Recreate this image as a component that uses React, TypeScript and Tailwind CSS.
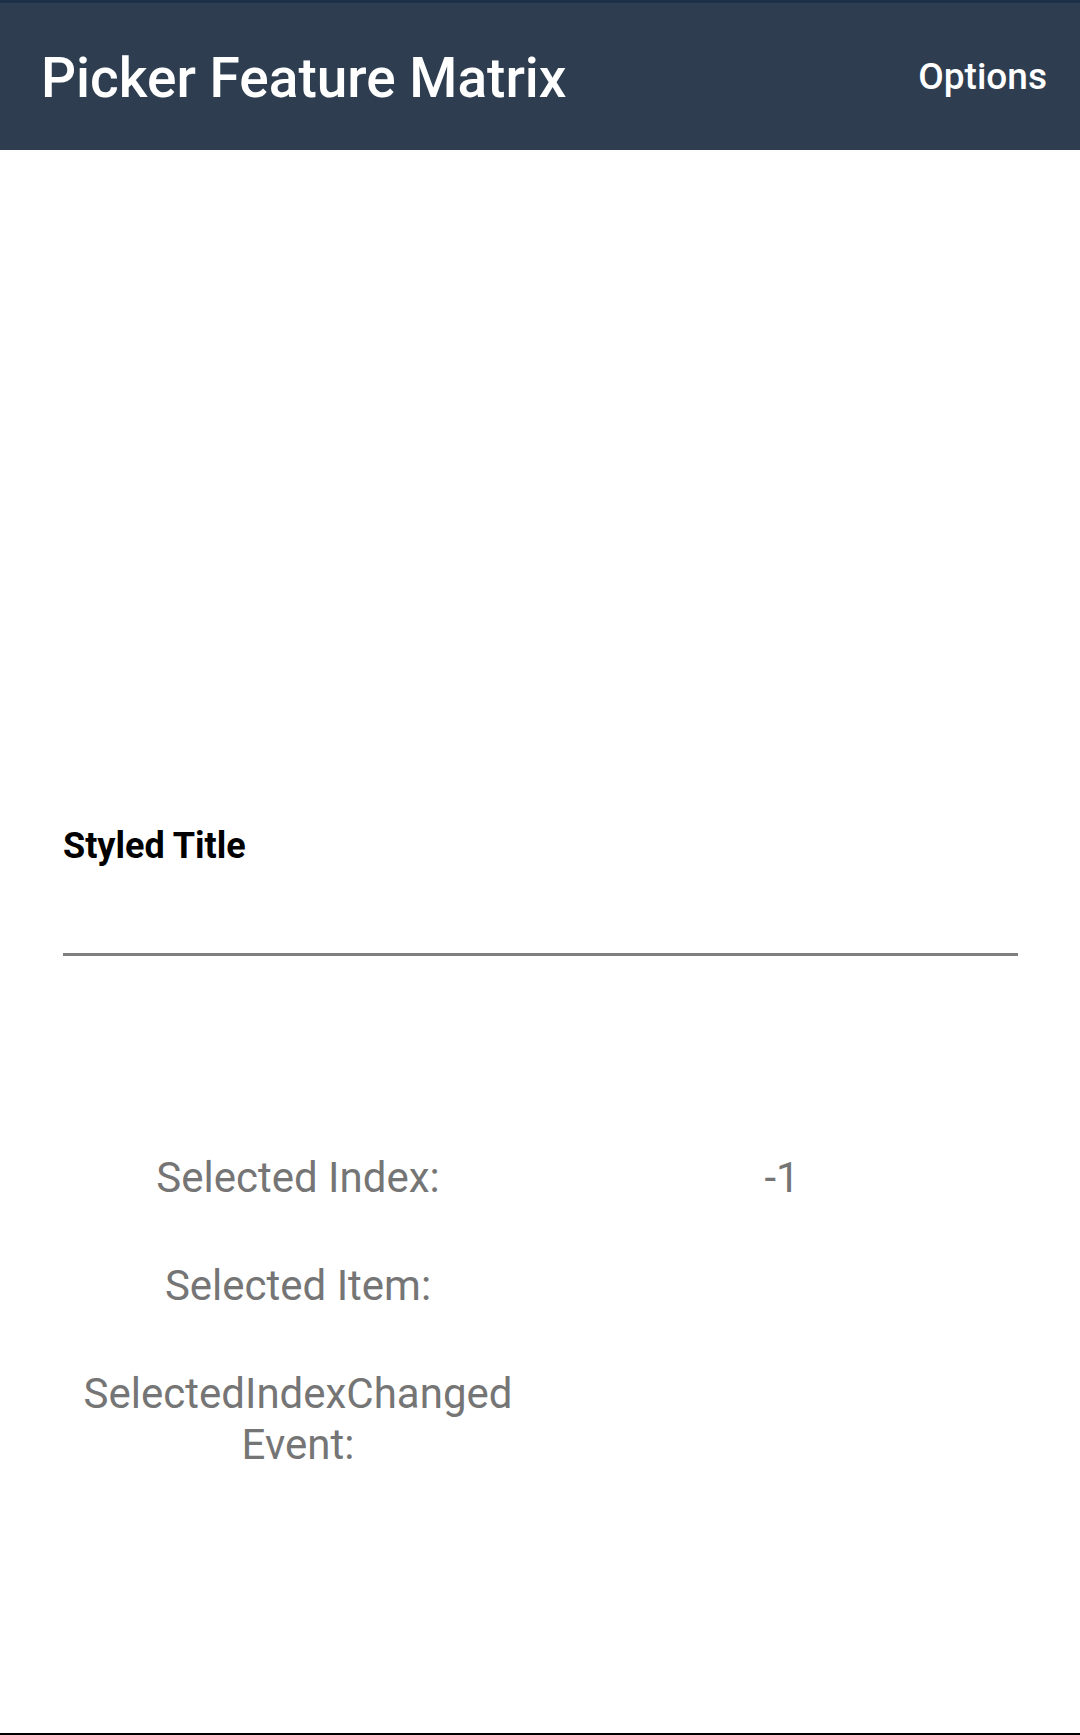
const font = { fontFamily: 'Roboto, "Noto Sans", sans-serif' };

function InfoRow({ label, value }: { label: string; value?: string }) {
    return (
        <div className="grid grid-cols-2 items-start">
            <div className="text-center text-[42px] leading-[51px] text-[#757575] whitespace-pre-line">{label}</div>
            <div className="text-center text-[42px] leading-[51px] text-[#757575]">{value ?? ''}</div>
        </div>
    );
}

export default function App() {
    return (
        <div className="w-[1080px] h-[1735px] bg-white flex flex-col" style={font}>
            <div className="h-[3px] bg-[#1c3048]" />
            <header className="h-[147px] bg-[#2e3e50] flex items-center justify-between pl-[41px] pr-[33px]">
                <h1 className="text-white text-[55px] leading-[64px] font-medium pt-[2px]">Picker Feature Matrix</h1>
                <button className="text-white text-[37px] leading-[43px] font-medium">Options</button>
            </header>

            {/* picker area, empty until something is chosen */}
            <div className="h-[675px]" />

            <div className="pl-[63px] pr-[62px]">
                <div className="text-black text-[36px] leading-[42px] font-bold">Styled Title</div>
                <div className="mt-[86px] h-[3px] bg-[#7f7f7f]" />
            </div>

            <div className="mt-[196px] px-[56px] flex flex-col gap-[57px]">
                <InfoRow label="Selected Index:" value="-1" />
                <InfoRow label="Selected Item:" />
                <InfoRow label={'SelectedIndexChanged\nEvent:'} />
            </div>

            <div className="flex-1" />
            <div className="h-[2px] bg-black" />
        </div>
    );
}
